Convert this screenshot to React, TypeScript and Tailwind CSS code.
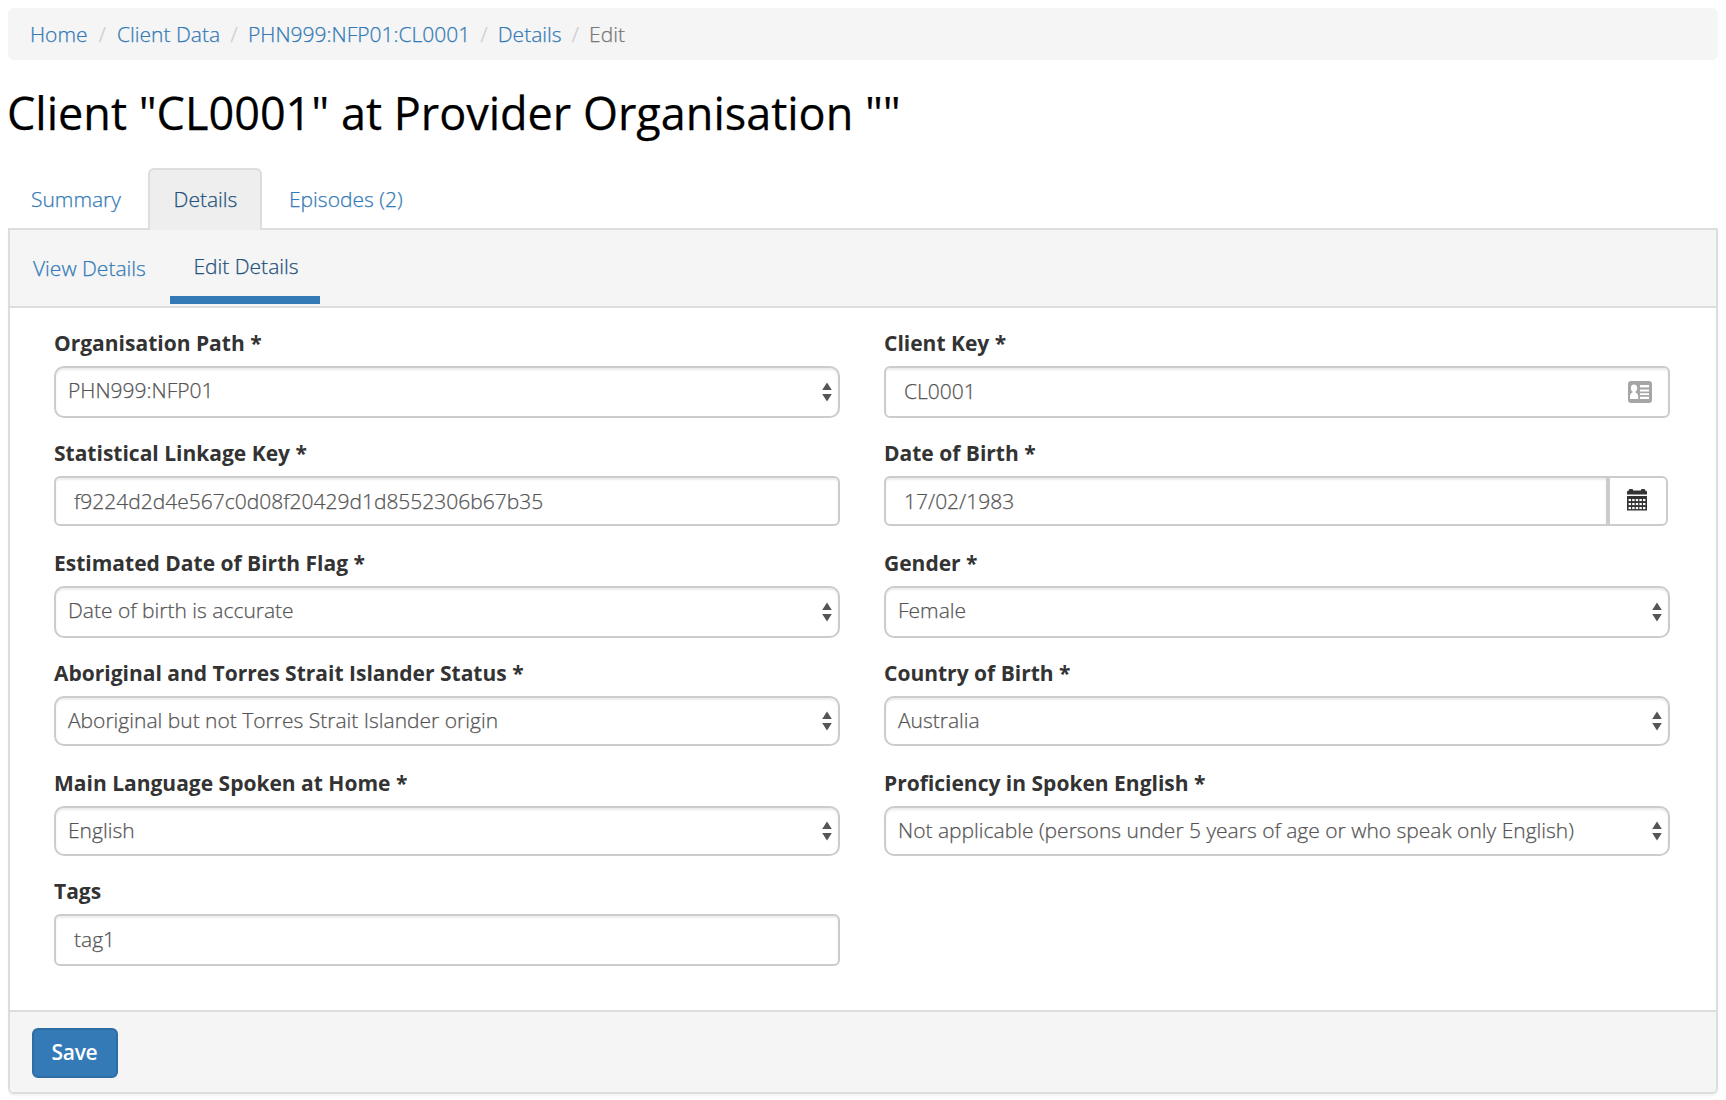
import React from "react";

const font = "font-['Open_Sans',sans-serif]";

function Arrows() {
  return (
    <svg width="10" height="20" viewBox="0 0 10 20" className="shrink-0" fill="#555">
      <path d="M5 0.5 9.8 8H0.2Z" />
      <path d="M5 19.5 9.8 12H0.2Z" />
    </svg>
  );
}

function IdCard() {
  return (
    <svg width="24" height="22" viewBox="0 0 24 22" className="shrink-0">
      <rect width="24" height="22" rx="3" fill="#a6a6a6" />
      <ellipse cx="6" cy="7.2" rx="3.1" ry="3.6" fill="#fff" />
      <path d="M4.6 9h2.8v2.4c1.8.6 2.8 2 2.8 4.4V18H2v-2.2c0-2.4.8-3.8 2.6-4.4Z" fill="#fff" />
      <path d="M12 4h9v2.2h-9ZM12 8.6h9v2h-9ZM12 12.2h9V14h-9ZM12 15.8h9V18h-9Z" fill="#fff" />
      <path d="M12 6h9v1h-9Z" fill="#ccc" />
    </svg>
  );
}

function Calendar() {
  const cols = [1.6, 5.2, 8.8, 12.4, 16];
  const rows = [10, 14, 18];
  return (
    <svg width="20" height="22" viewBox="0 0 20 22" fill="#333">
      <path d="M0 5.5V3Q0 1.500 1.500 1.500H2V.8Q2 0 3 0H5Q6 0 6 .8V1.500H14V.8Q14 0 15 0H17Q18 0 18 .8V1.500H18.500Q20 1.500 20 3V5.500Z" />
      <path d="M0 7H20V21.500H0Z" />
      {rows.map((y) =>
        cols.map((x) => <rect key={`${x}-${y}`} x={x} y={y} width="2.4" height="2.1" fill="#fff" />)
      )}
    </svg>
  );
}

type FieldProps = {
  label: string;
  value: string;
  kind?: "select" | "text" | "id" | "date";
  short?: boolean;
};

const shadow = "shadow-[inset_0_2px_2px_rgba(0,0,0,0.075)]";

function Field({ label, value, kind = "select", short = false }: FieldProps) {
  const height = short ? "h-[50px]" : "h-[52px]";
  const selectPad = short ? "pb-px" : "pb-[3px]";
  const textPad = short ? "pt-[2px]" : "";
  return (
    <div className="w-[786px] text-[#555]">
      <label className="block h-[38px] text-[21px] leading-[30px] font-bold text-[#333] [-webkit-text-stroke:0]">{label}</label>
      {kind === "date" ? (
        <div className={`flex w-[784px] ${height}`}>
          <div className={`flex flex-1 items-center rounded-l-[6px] border-2 border-[#ccc] pl-[18px] ${shadow}`}>
            <span className={textPad}>{value}</span>
          </div>
          <div className="flex w-[60px] items-center justify-center rounded-r-[6px] border-2 border-[#ccc] pr-[2px] pb-[3px]">
            <Calendar />
          </div>
        </div>
      ) : (
        <div
          className={`flex items-center justify-between border-2 border-[#ccc] ${height} ${shadow} ${
            kind === "select" ? "rounded-[10px] pr-[6px] pl-[12px]" : "rounded-[6px] pr-[16px] pl-[18px]"
          }`}
        >
          <span className={kind === "select" ? selectPad : textPad}>{value}</span>
          {kind === "select" && <Arrows />}
          {kind === "id" && <IdCard />}
        </div>
      )}
    </div>
  );
}

export default function App() {
  const crumbs = [
    { text: "Home", gap: "w-[29.5px]" },
    { text: "Client Data", gap: "w-[28px]" },
    { text: "PHN999:NFP01:CL0001", gap: "w-[27.5px]" },
    { text: "Details", gap: "w-[27.5px]" },
  ];
  return (
    <div
      className={`h-[1100px] w-[1726px] overflow-hidden bg-white px-2 pt-2 text-[21px] font-light whitespace-nowrap [-webkit-text-stroke:0.25px] ${font}`}
    >
      <nav className="flex h-[52px] items-center rounded-[6px] bg-[#f5f5f5] pt-[2px] pl-[22px] text-[#337ab7]">
        {crumbs.map((c) => (
          <React.Fragment key={c.text}>
            <a>{c.text}</a>
            <span className={`text-center text-[#ccc] ${c.gap}`}>/</span>
          </React.Fragment>
        ))}
        <span className="text-[#777]">Edit</span>
      </nav>
      <h1 className="mt-[19px] -ml-px h-[69px] text-[45px] leading-[68px] font-normal text-black">
        Client "CL0001" at Provider Organisation ""
      </h1>
      <div className="mt-[20px] flex h-[60px] items-center text-[#337ab7]">
        <a className="w-[140px] pt-[4px] pl-[23px]">Summary</a>
        <a className="relative z-10 -mb-[2px] flex h-[62px] w-[114px] items-center justify-center rounded-t-[6px] border-2 border-b-0 border-[#ddd] bg-[#eee] pl-px text-[#23527c]">
          Details
        </a>
        <a className="pt-[4px] pl-[27px]">Episodes (2)</a>
      </div>
      <main className="h-[866px] w-[1710px] overflow-hidden rounded-b-[6px] border-2 border-[#ddd] bg-white shadow-[0_2px_2px_rgba(0,0,0,0.05)]">
        <div className="flex h-[78px] border-b-2 border-[#ddd] bg-[#f5f5f5] text-[#337ab7]">
          <a className="w-[160px] pt-[23px] pl-[23px] leading-[30px]">View Details</a>
          <a className="h-[74px] w-[150px] border-b-8 border-[#337ab7] pt-[21px] pl-[2px] text-center leading-[30px] text-[#23527c]">
            Edit Details
          </a>
        </div>
        <div className="grid h-[702px] grid-cols-[786px_786px] grid-rows-[110px_110px_110px_110px_108px_110px] gap-x-[44px] pt-[20px] pl-[44px]">
          <Field label="Organisation Path *" value="PHN999:NFP01" />
          <Field label="Client Key *" value="CL0001" kind="id" />
          <Field label="Statistical Linkage Key *" value="f9224d2d4e567c0d08f20429d1d8552306b67b35" kind="text" short />
          <Field label="Date of Birth *" value="17/02/1983" kind="date" short />
          <Field label="Estimated Date of Birth Flag *" value="Date of birth is accurate" />
          <Field label="Gender *" value="Female" />
          <Field
            label="Aboriginal and Torres Strait Islander Status *"
            value="Aboriginal but not Torres Strait Islander origin"
            short
          />
          <Field label="Country of Birth *" value="Australia" short />
          <Field label="Main Language Spoken at Home *" value="English" short />
          <Field
            label="Proficiency in Spoken English *"
            value="Not applicable (persons under 5 years of age or who speak only English)"
            short
          />
          <Field label="Tags" value="tag1" kind="text" />
        </div>
        <footer className="h-[82px] border-t-2 border-[#ddd] bg-[#f5f5f5] pt-4 pl-[22px]">
          <button className="h-[50px] w-[86px] rounded-[6px] border-2 border-[#2e6da4] bg-[#337ab7] pr-px pb-px text-[21px] font-semibold tracking-[-0.3px] text-white [-webkit-text-stroke:0]">
            Save
          </button>
        </footer>
      </main>
    </div>
  );
}
